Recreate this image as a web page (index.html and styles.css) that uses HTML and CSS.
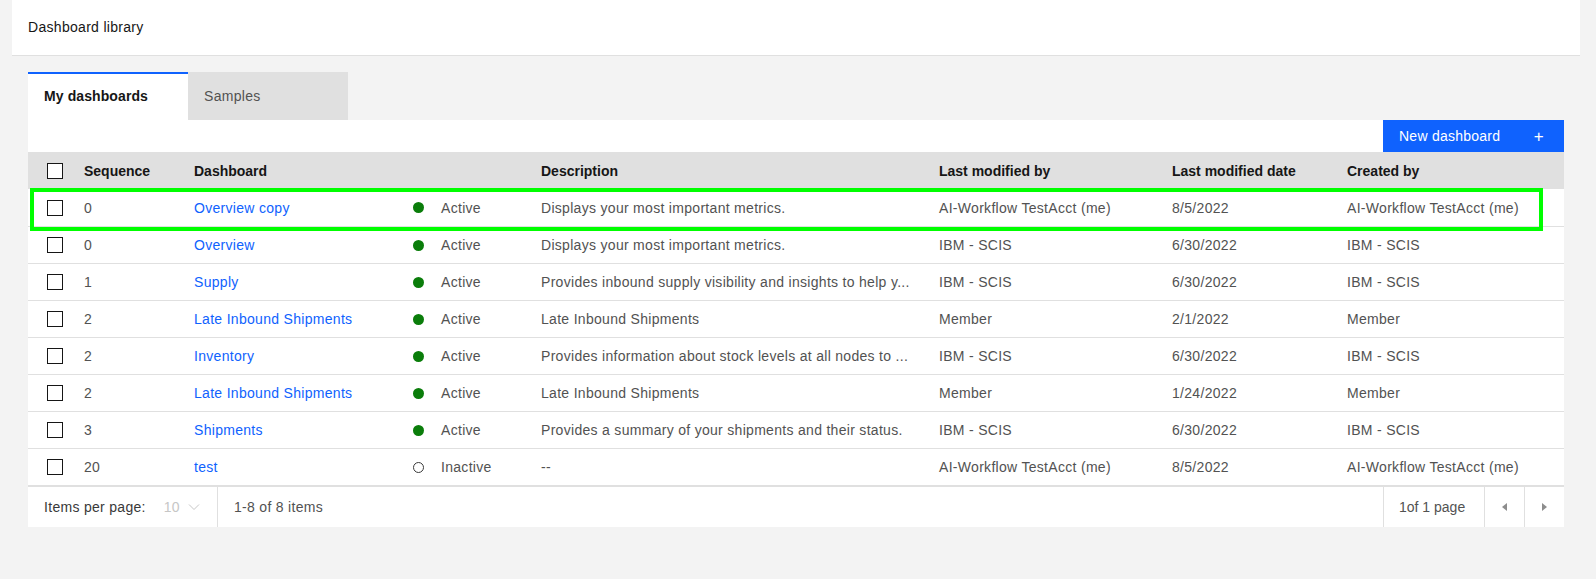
FILE: index.html
```html
<!DOCTYPE html>
<html lang="en">
<head>
<meta charset="utf-8">
<title>Dashboard library</title>
<link rel="stylesheet" href="styles.css">
</head>
<body>
<header class="topbar">Dashboard library</header>
<main class="main">
  <div class="tabs">
    <div class="tab tab-active">My dashboards</div>
    <div class="tab">Samples</div>
  </div>
  <section class="panel">
    <div class="toolbar">
      <button class="btn-primary"><span>New dashboard</span><span class="plus">+</span></button>
    </div>
    <table class="grid">
      <colgroup>
        <col class="c-check"><col class="c-seq"><col class="c-dash"><col class="c-status"><col class="c-desc"><col class="c-by"><col class="c-date"><col class="c-created">
      </colgroup>
      <thead>
        <tr>
          <th class="cb-cell"><span class="cb"></span></th>
          <th>Sequence</th>
          <th>Dashboard</th>
          <th></th>
          <th>Description</th>
          <th>Last modified by</th>
          <th>Last modified date</th>
          <th>Created by</th>
        </tr>
      </thead>
      <tbody>
        <tr>
          <td class="cb-cell"><span class="cb"></span></td><td>0</td><td><a class="lnk">Overview copy</a></td>
          <td><span class="status"><span class="dot"></span>Active</span></td>
          <td>Displays your most important metrics.</td><td>AI-Workflow TestAcct (me)</td><td>8/5/2022</td><td>AI-Workflow TestAcct (me)</td>
        </tr>
        <tr>
          <td class="cb-cell"><span class="cb"></span></td><td>0</td><td><a class="lnk">Overview</a></td>
          <td><span class="status"><span class="dot"></span>Active</span></td>
          <td>Displays your most important metrics.</td><td>IBM - SCIS</td><td>6/30/2022</td><td>IBM - SCIS</td>
        </tr>
        <tr>
          <td class="cb-cell"><span class="cb"></span></td><td>1</td><td><a class="lnk">Supply</a></td>
          <td><span class="status"><span class="dot"></span>Active</span></td>
          <td>Provides inbound supply visibility and insights to help y...</td><td>IBM - SCIS</td><td>6/30/2022</td><td>IBM - SCIS</td>
        </tr>
        <tr>
          <td class="cb-cell"><span class="cb"></span></td><td>2</td><td><a class="lnk">Late Inbound Shipments</a></td>
          <td><span class="status"><span class="dot"></span>Active</span></td>
          <td>Late Inbound Shipments</td><td>Member</td><td>2/1/2022</td><td>Member</td>
        </tr>
        <tr>
          <td class="cb-cell"><span class="cb"></span></td><td>2</td><td><a class="lnk">Inventory</a></td>
          <td><span class="status"><span class="dot"></span>Active</span></td>
          <td>Provides information about stock levels at all nodes to ...</td><td>IBM - SCIS</td><td>6/30/2022</td><td>IBM - SCIS</td>
        </tr>
        <tr>
          <td class="cb-cell"><span class="cb"></span></td><td>2</td><td><a class="lnk">Late Inbound Shipments</a></td>
          <td><span class="status"><span class="dot"></span>Active</span></td>
          <td>Late Inbound Shipments</td><td>Member</td><td>1/24/2022</td><td>Member</td>
        </tr>
        <tr>
          <td class="cb-cell"><span class="cb"></span></td><td>3</td><td><a class="lnk">Shipments</a></td>
          <td><span class="status"><span class="dot"></span>Active</span></td>
          <td>Provides a summary of your shipments and their status.</td><td>IBM - SCIS</td><td>6/30/2022</td><td>IBM - SCIS</td>
        </tr>
        <tr>
          <td class="cb-cell"><span class="cb"></span></td><td>20</td><td><a class="lnk">test</a></td>
          <td><span class="status"><span class="dot dot-off"></span>Inactive</span></td>
          <td>--</td><td>AI-Workflow TestAcct (me)</td><td>8/5/2022</td><td>AI-Workflow TestAcct (me)</td>
        </tr>
      </tbody>
    </table>
    <div class="highlight"></div>
    <div class="pager">
      <div class="pager-left">
        <div class="per-page">
          <span class="label">Items per page:</span>
          <span class="select">10
            <svg class="chev" width="12" height="8" viewBox="0 0 12 8"><path d="M1 1.5 L6 6.5 L11 1.5" fill="none" stroke="#c6c6c6" stroke-width="1"/></svg>
          </span>
        </div>
        <span class="range">1-8 of 8 items</span>
      </div>
      <div class="pager-right">
        <span class="pages">1of 1 page</span>
        <span class="pg-btn"><svg width="6" height="8" viewBox="0 0 6 8"><path d="M5 0 L0 4 L5 8 Z" fill="#8d8d8d"/></svg></span>
        <span class="pg-btn"><svg width="6" height="8" viewBox="0 0 6 8"><path d="M0 0 L5 4 L0 8 Z" fill="#8d8d8d"/></svg></span>
      </div>
    </div>
  </section>
</main>
</body>
</html>
```
FILE: styles.css
```css
* { box-sizing: border-box; }

body {
  margin: 0;
  background: #f3f3f3;
  font-family: "Liberation Sans", Arial, sans-serif;
  font-size: 14px;
  color: #161616;
  letter-spacing: 0.3px;
}

.topbar {
  margin-left: 12px;
  width: 1568px;
  height: 56px;
  background: #ffffff;
  border-bottom: 1px solid #e0e0e0;
  display: flex;
  align-items: center;
  padding-left: 16px;
  padding-bottom: 1px;
  color: #161616;
}

.main {
  padding: 16px 0 0 28px;
  width: 1564px;
}

.tabs {
  display: flex;
  height: 48px;
}

.tab {
  width: 160px;
  height: 48px;
  background: #e0e0e0;
  color: #525252;
  display: flex;
  align-items: center;
  padding-left: 16px;
}

.tab-active {
  background: #ffffff;
  border-top: 2px solid #0f62fe;
  padding-bottom: 2px;
  color: #161616;
  font-weight: 700;
  letter-spacing: 0.1px;
}

.panel {
  position: relative;
  width: 1536px;
  background: #ffffff;
}

.toolbar {
  height: 32px;
  display: flex;
  justify-content: flex-end;
}

.btn-primary {
  width: 181px;
  height: 32px;
  border: 0;
  background: #0f62fe;
  color: #ffffff;
  font: inherit;
  letter-spacing: 0.25px;
  display: flex;
  align-items: center;
  justify-content: space-between;
  padding: 0 20px 0 16px;
}

.plus {
  font-size: 17px;
  line-height: 1;
}

.grid {
  width: 1536px;
  border-collapse: collapse;
  table-layout: fixed;
}

.c-check { width: 40px; }
.c-seq { width: 110px; }
.c-dash { width: 219px; }
.c-status { width: 128px; }
.c-desc { width: 398px; }
.c-by { width: 233px; }
.c-date { width: 175px; }
.c-created { width: 233px; }

.grid th {
  height: 37px;
  background: #e0e0e0;
  text-align: left;
  font-weight: 700;
  color: #161616;
  padding: 1px 0 0 16px;
  letter-spacing: 0;
  white-space: nowrap;
}

.grid td {
  height: 37px;
  border-bottom: 1px solid #e0e0e0;
  color: #525252;
  padding: 1px 0 0 16px;
  white-space: nowrap;
  overflow: hidden;
}

.grid .cb-cell {
  padding-left: 19px;
  padding-top: 1px;
}

.cb {
  display: block;
  width: 16px;
  height: 16px;
  border: 1px solid #161616;
  background: #ffffff;
}

.lnk {
  color: #0f62fe;
  text-decoration: none;
}

.status {
  display: flex;
  align-items: center;
  gap: 17px;
}

.dot {
  width: 11px;
  height: 11px;
  border-radius: 50%;
  background: #0a7d0a;
  flex: none;
}

.dot-off {
  background: transparent;
  border: 1.5px solid #393939;
}

.highlight {
  position: absolute;
  left: 2px;
  top: 68px;
  width: 1513px;
  height: 43px;
  border: 4px solid #00ff00;
  pointer-events: none;
}

.pager {
  height: 41px;
  border-top: 1px solid #e0e0e0;
  display: flex;
  justify-content: space-between;
  color: #393939;
}

.pager-left,
.pager-right {
  display: flex;
  align-items: stretch;
}

.per-page {
  width: 190px;
  display: flex;
  align-items: center;
  padding-left: 16px;
  border-right: 1px solid #e0e0e0;
}

.select {
  margin-left: 18px;
  color: #c6c6c6;
  display: flex;
  align-items: center;
  gap: 8px;
}

.range {
  display: flex;
  align-items: center;
  padding-left: 16px;
  color: #525252;
}

.pages {
  width: 101px;
  display: flex;
  align-items: center;
  padding-left: 15px;
  border-left: 1px solid #e0e0e0;
  letter-spacing: 0;
  color: #525252;
}

.pg-btn {
  width: 40px;
  border-left: 1px solid #e0e0e0;
  display: flex;
  align-items: center;
  justify-content: center;
}
```
